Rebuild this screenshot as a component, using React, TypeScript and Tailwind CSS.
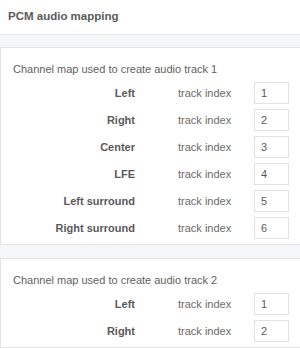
const tracks = [
  {
    title: 'Channel map used to create audio track 1',
    channels: ['Left', 'Right', 'Center', 'LFE', 'Left surround', 'Right surround'],
  },
  {
    title: 'Channel map used to create audio track 2',
    channels: ['Left', 'Right'],
  },
];

function ChannelRow({ label, index }: { label: string; index: number }) {
  return (
    <div className="flex h-[22px] items-center">
      <div className="w-[134px] text-right text-[11px] font-bold text-[#5a5a5a]">{label}</div>
      <div className="ml-[43px] w-[76px] text-[11px] text-[#6a6a6a]">track index</div>
      <input
        readOnly
        value={index}
        className="h-[22px] w-[35px] border border-[#e2e2e2] bg-white pl-[6px] text-[11px] text-[#5a5a5a] outline-none"
      />
    </div>
  );
}

export default function App() {
  return (
    <div className="h-[348px] w-[300px] overflow-hidden bg-[#f5f6f8] font-['Liberation_Sans',Arial,sans-serif]">
      <header className="flex h-[35px] items-center border-b border-[#e4e6ea] bg-white pl-[8px]">
        <h1 className="text-[11.5px] font-bold text-[#5a5a5a]">PCM audio mapping</h1>
      </header>
      <div className="flex flex-col gap-[13px] pt-[12px]">
        {tracks.map((track) => (
          <section
            key={track.title}
            className="border-y border-l border-[#e3e3e3] bg-white pb-[5px] pt-[14px]"
          >
            <p className="pl-[12px] text-[11px] leading-[14px] text-[#5f5f5f]">{track.title}</p>
            <div className="mt-[6px] flex flex-col gap-[5px]">
              {track.channels.map((ch, i) => (
                <ChannelRow key={ch} label={ch} index={i + 1} />
              ))}
            </div>
          </section>
        ))}
      </div>
    </div>
  );
}
